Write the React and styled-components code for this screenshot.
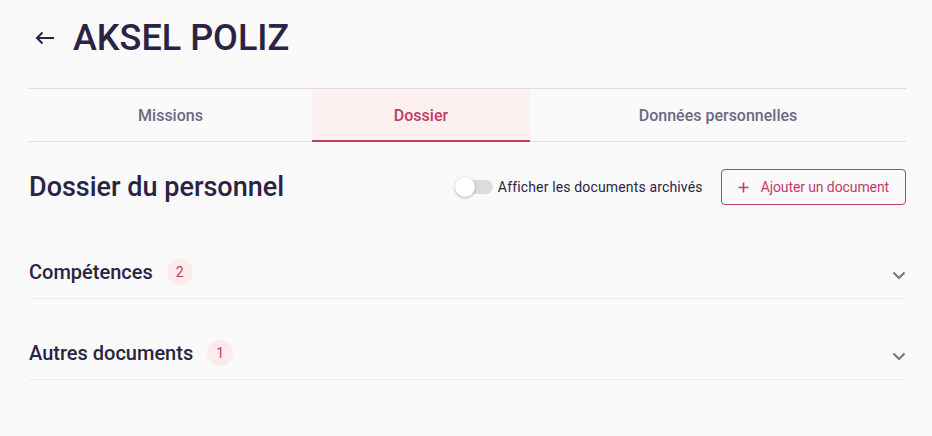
import React, { useState } from "react";
import styled, { createGlobalStyle } from "styled-components";

const Global = createGlobalStyle`
  html, body { margin: 0; padding: 0; background: #fafafa; }
  body { font-family: Roboto, "Noto Sans", Arial, sans-serif; color: #2b2343; }
  * { box-sizing: border-box; }
`;

const Page = styled.div`
  padding: 0 26px 0 29px;
  min-height: 436px;
  background: #fafafa;
`;

const Header = styled.header`
  display: flex;
  align-items: center;
  height: 88px;
  padding-bottom: 13px;
  gap: 18px;
`;

const BackButton = styled.button`
  border: none;
  background: transparent;
  padding: 0;
  margin-left: 6px;
  display: flex;
  align-items: center;
  color: #2b2343;
  cursor: pointer;
`;

const Title = styled.h1`
  margin: 0;
  font-size: 36px;
  font-weight: 500;
  color: #2b2343;
`;

const Tabs = styled.nav`
  display: grid;
  grid-template-columns: 283px 218px 1fr;
  border-top: 1px solid #dedcec;
  border-bottom: 1px solid #dedcec;
  height: 54px;
`;

const Tab = styled.button`
  border: none;
  background: ${(p) => (p.$active ? "#fcf0f1" : "transparent")};
  color: ${(p) => (p.$active ? "#c13a68" : "#6d6886")};
  font-family: Roboto, sans-serif;
  font-size: 16px;
  font-weight: 500;
  box-shadow: ${(p) => (p.$active ? "inset 0 -2px 0 #c13a68" : "none")};
  margin-bottom: -1px;
  cursor: pointer;
`;

const SectionHeader = styled.div`
  display: flex;
  align-items: center;
  justify-content: space-between;
  margin-top: 27px;
  height: 36px;
`;

const SectionTitle = styled.h2`
  margin: 0;
  font-size: 27px;
  font-weight: 500;
  color: #2b2343;
`;

const Actions = styled.div`
  display: flex;
  align-items: center;
  gap: 18px;
`;

const ToggleLabel = styled.label`
  display: flex;
  align-items: center;
  gap: 5px;
  font-size: 14px;
  letter-spacing: 0.15px;
  color: #2b2343;
  cursor: pointer;
`;

const Track = styled.span`
  position: relative;
  width: 36px;
  height: 14px;
  border-radius: 7px;
  background: #dddbdf;
`;

const Knob = styled.span`
  position: absolute;
  top: -3px;
  left: -2px;
  width: 20px;
  height: 20px;
  border-radius: 50%;
  background: #ffffff;
  box-shadow: 0 1px 3px rgba(0, 0, 0, 0.3);
`;

const AddButton = styled.button`
  display: flex;
  align-items: center;
  gap: 12px;
  height: 36px;
  padding: 0 16px;
  border: 1px solid #c13a68;
  border-radius: 4px;
  background: transparent;
  color: #c13a68;
  font-family: Roboto, sans-serif;
  font-size: 14px;
  letter-spacing: -0.1px;
  cursor: pointer;
`;

const Accordion = styled.div`
  margin-top: 13px;
`;

const Row = styled.div`
  display: flex;
  align-items: center;
  justify-content: space-between;
  padding: 40px 0 12px;
  border-bottom: 1px solid #ecebef;
`;

const RowLeft = styled.div`
  display: flex;
  align-items: center;
  gap: 14px;
  height: 28px;
`;

const RowTitle = styled.span`
  font-size: 20px;
  font-weight: 500;
  color: #2b2343;
`;

const Badge = styled.span`
  display: inline-flex;
  align-items: center;
  justify-content: center;
  width: 26px;
  height: 26px;
  border-radius: 50%;
  background: #fcebec;
  color: #c13a68;
  font-size: 14px;
`;

const Chevron = styled.span`
  display: flex;
  margin-right: 0;
  margin-top: 6px;
`;

const ArrowLeft = () => (
  <svg width="20" height="14" viewBox="0 0 20 14" fill="none">
    <path d="M19 7H2M7.5 1.5L2 7l5.5 5.5" stroke="#2b2343" strokeWidth="2" />
  </svg>
);

const ChevronDown = () => (
  <svg width="14" height="9" viewBox="0 0 14 9" fill="none">
    <path d="M1.5 1.5L7 7l5.5-5.5" stroke="#77757c" strokeWidth="2" />
  </svg>
);

const Plus = () => (
  <svg width="11" height="11" viewBox="0 0 11 11" fill="none">
    <path d="M5.5 0.5v10M0.5 5.5h10" stroke="#c13a68" strokeWidth="1.6" />
  </svg>
);

export default function App() {
  const [tab, setTab] = useState("Dossier");
  const tabs = ["Missions", "Dossier", "Données personnelles"];
  const rows = [
    { title: "Compétences", count: 2 },
    { title: "Autres documents", count: 1 },
  ];
  return (
    <>
      <Global />
      <Page>
        <Header>
          <BackButton aria-label="Retour">
            <ArrowLeft />
          </BackButton>
          <Title>AKSEL POLIZ</Title>
        </Header>
        <Tabs>
          {tabs.map((t) => (
            <Tab key={t} $active={t === tab} onClick={() => setTab(t)}>
              {t}
            </Tab>
          ))}
        </Tabs>
        <SectionHeader>
          <SectionTitle>Dossier du personnel</SectionTitle>
          <Actions>
            <ToggleLabel>
              <Track>
                <Knob />
              </Track>
              Afficher les documents archivés
            </ToggleLabel>
            <AddButton>
              <Plus />
              Ajouter un document
            </AddButton>
          </Actions>
        </SectionHeader>
        <Accordion>
          {rows.map((r) => (
            <Row key={r.title}>
              <RowLeft>
                <RowTitle>{r.title}</RowTitle>
                <Badge>{r.count}</Badge>
              </RowLeft>
              <Chevron>
                <ChevronDown />
              </Chevron>
            </Row>
          ))}
        </Accordion>
      </Page>
    </>
  );
}
